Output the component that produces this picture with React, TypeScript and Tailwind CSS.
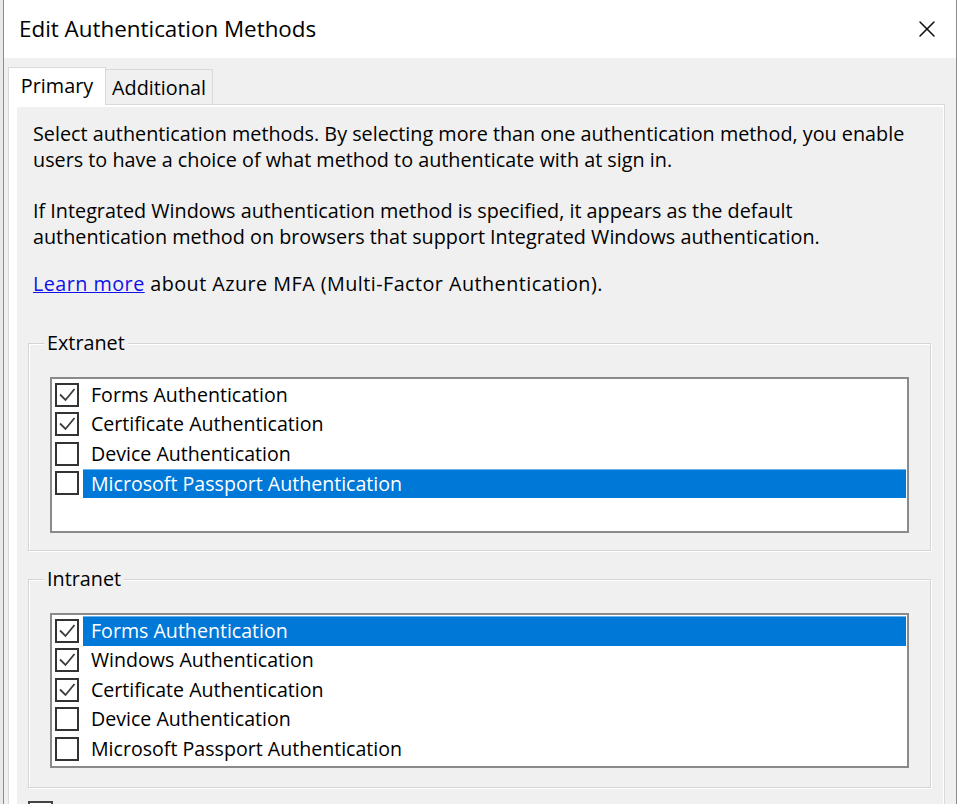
import { X } from "lucide-react";

type Item = { label: string; checked: boolean; selected?: boolean };

const extranet: Item[] = [
  { label: "Forms Authentication", checked: true },
  { label: "Certificate Authentication", checked: true },
  { label: "Device Authentication", checked: false },
  { label: "Microsoft Passport Authentication", checked: false, selected: true },
];

const intranet: Item[] = [
  { label: "Forms Authentication", checked: true, selected: true },
  { label: "Windows Authentication", checked: true },
  { label: "Certificate Authentication", checked: true },
  { label: "Device Authentication", checked: false },
  { label: "Microsoft Passport Authentication", checked: false },
];

function CheckBox({ checked }: { checked: boolean }) {
  return (
    <div className="flex h-[24px] w-[24px] shrink-0 items-center justify-center border-2 border-[#333] bg-white">
      {checked && (
        <svg width="20" height="20" viewBox="0 0 20 20" fill="none">
          <path d="M3 9.5 L8.5 15 L17.5 4" stroke="#3c3c3c" strokeWidth="1.8" />
        </svg>
      )}
    </div>
  );
}

function ListBox({ items, height }: { items: Item[]; height: string }) {
  return (
    <div className={`mx-[21px] mt-[33px] border-2 border-[#8a8a8a] bg-white pt-[1px] text-[19.6px] ${height}`}>
      {items.map((it) => (
        <div key={it.label} className="flex h-[29.5px] items-center">
          <div className="ml-[3px]">
            <CheckBox checked={it.checked} />
          </div>
          <div
            className={`ml-[4px] mr-[1px] flex h-full flex-1 items-center pl-[8px] ${
              it.selected ? "border-t border-[#6cb2ea] bg-[#0078d7] text-white" : "text-black"
            }`}
          >
            {it.label}
          </div>
        </div>
      ))}
    </div>
  );
}

function Group({ title, items, className, listHeight }: { title: string; items: Item[]; className: string; listHeight: string }) {
  return (
    <div className={`relative border border-[#d5d5d5] shadow-[inset_1px_1px_0_#fff,1px_1px_0_#fff] ${className}`}>
      <span className="absolute -top-[14px] left-[15px] bg-[#f0f0f0] px-[3px] leading-[26px] text-black">{title}</span>
      <ListBox items={items} height={listHeight} />
    </div>
  );
}

export default function App() {
  return (
    <div className="flex h-[804px] w-[960px] overflow-hidden bg-[#ececec] font-['Open_Sans',sans-serif] text-[19.8px] text-black">
      <div className="w-[3px] shrink-0 bg-[#e9e9e9]" />
      <div className="flex w-[954px] shrink-0 flex-col border-x border-[#8c8c8c]">
        <div className="flex h-[58px] shrink-0 items-center justify-between bg-white pl-[15px] pr-[15px]">
          <span className="text-[22.4px] text-black">Edit Authentication Methods</span>
          <X size={28} strokeWidth={1.3} color="#111" />
        </div>

        <div className="flex flex-1 flex-col bg-[#f0f0f0] pl-[4px] pr-[11px] pt-[9px]">
          <div className="flex items-end">
            <div className="relative z-10 -mb-px flex h-[38px] w-[98px] items-center justify-center border-x border-t border-[#d9d9d9] bg-white pb-[2px]">
              Primary
            </div>
            <div className="flex h-[35px] w-[107px] items-center justify-center border-r border-t border-[#d9d9d9] bg-[#f0f0f0] pt-[2px]">
              Additional
            </div>
          </div>

          <div className="flex flex-1 flex-col border-x border-t border-[#d9d9d9] bg-white">
            <div className="ml-[8px] mr-[1px] mt-[2px] flex-1 bg-[#f0f0f0] pl-[11px] pr-[12px] pt-[14px] leading-[26px]">
              <p className="whitespace-nowrap pl-[5px]">
                Select authentication methods. By selecting more than one authentication method, you enable
                <br />
                users to have a choice of what method to authenticate with at sign in.
              </p>
              <p className="mt-[25px] whitespace-nowrap pl-[5px]">
                If Integrated Windows authentication method is specified, it appears as the default
                <br />
                authentication method on browsers that support Integrated Windows authentication.
              </p>
              <p className="mt-[21px] whitespace-nowrap pl-[5px] tracking-[0.45px]">
                <span className="text-[#1010e8] underline">Learn more</span> about Azure MFA (Multi-Factor Authentication).
              </p>

              <Group title="Extranet" items={extranet} className="mt-[46px] h-[208px]" listHeight="h-[156px]" />
              <Group title="Intranet" items={intranet} className="mt-[28px] h-[209px]" listHeight="h-[155px]" />

              <div className="mt-[13px] h-[25px] w-[25px] border-2 border-[#444] bg-white" />
            </div>
          </div>
        </div>
      </div>
      <div className="w-[3px] shrink-0 bg-white" />
    </div>
  );
}
